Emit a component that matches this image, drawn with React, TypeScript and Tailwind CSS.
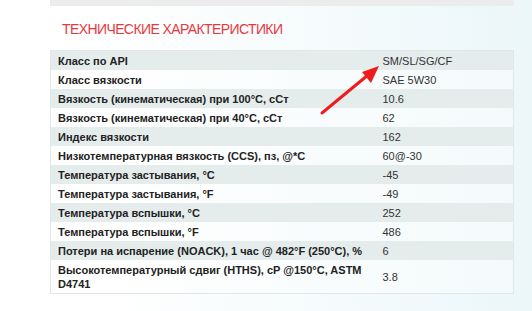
const rows: [string, string][] = [
  ['Класс по API', 'SM/SL/SG/CF'],
  ['Класс вязкости', 'SAE 5W30'],
  ['Вязкость (кинематическая) при 100°C, сСт', '10.6'],
  ['Вязкость (кинематическая) при 40°C, сСт', '62'],
  ['Индекс вязкости', '162'],
  ['Низкотемпературная вязкость (CCS), пз, @*C', '60@-30'],
  ['Температура застывания, °C', '-45'],
  ['Температура застывания, °F', '-49'],
  ['Температура вспышки, °C', '252'],
  ['Температура вспышки, °F', '486'],
  ['Потери на испарение (NOACK), 1 час @ 482°F (250°C), %', '6'],
  ['Высокотемпературный сдвиг (HTHS), cP @150°C, ASTM D4741', '3.8'],
];

export default function App() {
  return (
    <div className="relative h-[311px] w-[532px] overflow-hidden bg-gradient-to-r from-white from-20% to-[#ecf7fa] font-['Liberation_Sans',Arial,sans-serif]">
      <div className="ml-[50px] w-[464px]">
        <div className="h-[6px] bg-[#ececec]" />

        <h2 className="pl-[12px] pt-[11px] text-[14px] leading-[24px] tracking-[-0.6px] text-[#e6393f]">
          ТЕХНИЧЕСКИЕ ХАРАКТЕРИСТИКИ
        </h2>

        {/* Specs table */}
        <table className="mt-[9px] w-full table-fixed border-collapse border border-[#dfe7e8] text-[11px] leading-[14px]">
          <colgroup>
            <col className="w-[324px]" />
            <col />
          </colgroup>
          <tbody>
            {rows.map(([label, value], idx) => (
              <tr key={idx} className={idx % 2 === 0 ? 'bg-[#e5ecec]' : 'bg-white/40'}>
                <td className="py-[2.5px] pl-[7px] pr-[8px] align-middle font-bold text-[#222]">{label}</td>
                <td className="py-[2.5px] pl-[8px] align-middle text-[#333]">{value}</td>
              </tr>
            ))}
          </tbody>
        </table>
      </div>

      {/* Red arrow pointing to the API class */}
      <svg className="absolute left-0 top-0" width="532" height="311" viewBox="0 0 532 311">
        <line x1="322" y1="113" x2="368" y2="75" stroke="#ee1c1c" strokeWidth="3" strokeLinecap="round" />
        <polygon points="379,66 362,72 371,83" fill="#ee1c1c" />
      </svg>
    </div>
  );
}
